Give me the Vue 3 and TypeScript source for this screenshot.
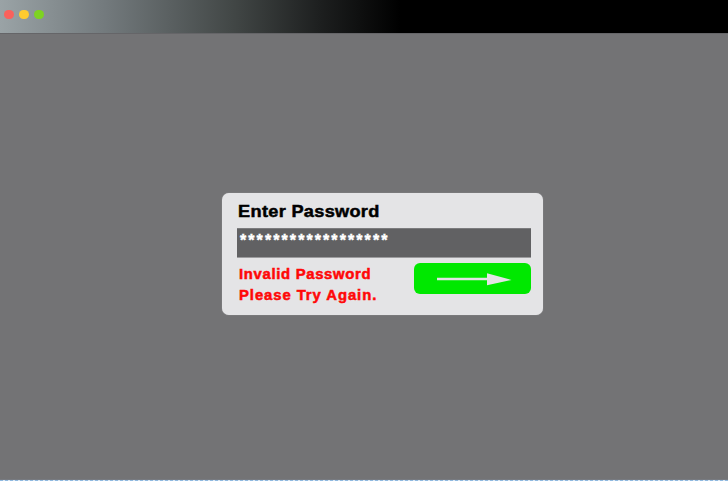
<script setup lang="ts">
import { ref } from 'vue'

const password = ref<string>('*'.repeat(18))
const messages: string[] = ['Invalid Password', 'Please Try Again.']
const controls: string[] = ['close', 'minimize', 'expand']
</script>

<template>
  <div class="window">
    <header class="titlebar">
      <span v-for="c in controls" :key="c" class="dot" :class="c"></span>
    </header>
    <main class="desktop">
      <form class="card" @submit.prevent>
        <h1 class="title">Enter Password</h1>
        <div class="field"><span class="mask">{{ password }}</span></div>
        <div class="bottom">
          <div class="error">
            <p v-for="m in messages" :key="m">{{ m }}</p>
          </div>
          <button class="submit" type="submit" aria-label="Submit">
            <svg width="117" height="31" viewBox="0 0 117 31">
              <path d="M23 16H74" stroke="#e4e4e6" stroke-width="2.6" />
              <path d="M73 10.2L97.5 17L73 22.2Z" fill="#e4e4e6" />
            </svg>
          </button>
        </div>
      </form>
    </main>
    <footer class="edge"></footer>
  </div>
</template>

<style>
body {
  margin: 0;
  overflow: hidden;
}
</style>

<style scoped>
.window {
  width: 728px;
  height: 481px;
  display: flex;
  flex-direction: column;
  background: #737375;
  font-family: "Liberation Sans", Arial, sans-serif;
  font-weight: 700;
}
.titlebar {
  box-sizing: border-box;
  height: 33px;
  flex: none;
  display: flex;
  gap: 5.4px;
  padding: 9.5px 0 0 4.3px;
  background: linear-gradient(90deg, #9aa3a6 0, #737a7d 105px, #414645 235px, #1d1f1f 320px, #000 400px);
}
.dot {
  width: 9.6px;
  height: 9.6px;
  border-radius: 50%;
}
.close { background: #fa615c; }
.minimize { background: #ffcb2f; }
.expand { background: #7ed321; }
.desktop {
  flex: 1;
  box-sizing: border-box;
  padding: 160px 0 0 222px;
  border-top: 1px solid #656568;
}
.card {
  box-sizing: border-box;
  width: 321px;
  height: 121.5px;
  margin-top: -1px;
  padding: 0 12px 0 15px;
  border-radius: 7px;
  background: #e4e4e6;
  box-shadow: 0 0 1px #b5b5b8;
}
.title {
  margin: 0;
  height: 35px;
  padding-left: 1px;
  font-size: 17px;
  line-height: 37px;
  color: #000;
  letter-spacing: 0.3px;
  white-space: nowrap;
  transform: scaleX(1.067);
  transform-origin: 0 0;
  -webkit-text-stroke: 0.5px #000;
}
.field {
  box-sizing: border-box;
  height: 30px;
  padding: 2px 0 0 3px;
  background: #616163;
  color: #fff;
  box-shadow: 0 -1px 0 #9c9c9e inset, 0 1px 0 #7c7c7e inset;
}
.mask {
  display: block;
  font-size: 16px;
  line-height: 22px;
  letter-spacing: 2.08px;
  -webkit-text-stroke: 0.4px #fff;
}
.bottom {
  display: flex;
  justify-content: space-between;
}
.error {
  width: 150px;
  padding: 6px 0 0 2px;
}
.error p {
  margin: 0;
  font-size: 14px;
  line-height: 21px;
  letter-spacing: 0.65px;
  color: #ff0808;
  white-space: nowrap;
  transform: scaleX(1.06);
  transform-origin: 0 0;
  -webkit-text-stroke: 0.5px #ff0808;
}
.error p:last-child {
  letter-spacing: 0.88px;
}
.submit {
  width: 117px;
  height: 31px;
  margin: 5px 0 0;
  padding: 0;
  border: 0;
  border-radius: 6px;
  background: #00e800;
}
.submit svg {
  display: block;
}
.edge {
  height: 2px;
  flex: none;
  border-top: 1px solid #777a80;
  box-sizing: border-box;
  background: repeating-linear-gradient(90deg, #8fb9e0 0 3px, #dce9f5 3px 5px);
}
</style>
